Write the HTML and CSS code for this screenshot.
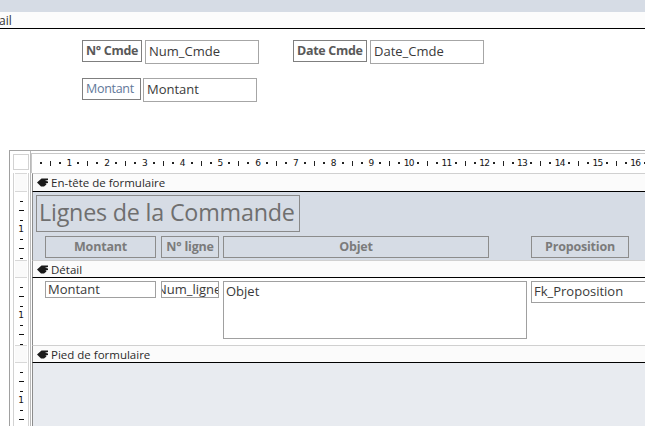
FILE: index.html
```html
<!DOCTYPE html>
<html lang="fr">
<head>
<meta charset="utf-8">
<title>Formulaire Commande</title>
<link rel="stylesheet" href="styles.css">
</head>
<body>
<div class="topband"></div>
<div class="tabbar"><span class="tabtext">ail</span></div>
<div class="mainform">
  <div class="row row1">
    <div class="lbl lbl-bold w-ncmde">N° Cmde</div>
    <div class="txt">Num_Cmde</div>
    <div class="lbl lbl-bold w-date">Date Cmde</div>
    <div class="txt">Date_Cmde</div>
  </div>
  <div class="row row2">
    <div class="lbl lbl-blue">Montant</div>
    <div class="txt">Montant</div>
  </div>
</div>

<div class="frame">
  <div class="frow ruler-row">
    <div class="side"><div class="strip"><div class="corner"></div></div></div>
    <div class="hruler">
      <span class="t dot"></span><span class="t bar"></span><span class="t dot"></span><span class="t num">1</span>
      <span class="t dot"></span><span class="t bar"></span><span class="t dot"></span><span class="t num">2</span>
      <span class="t dot"></span><span class="t bar"></span><span class="t dot"></span><span class="t num">3</span>
      <span class="t dot"></span><span class="t bar"></span><span class="t dot"></span><span class="t num">4</span>
      <span class="t dot"></span><span class="t bar"></span><span class="t dot"></span><span class="t num">5</span>
      <span class="t dot"></span><span class="t bar"></span><span class="t dot"></span><span class="t num">6</span>
      <span class="t dot"></span><span class="t bar"></span><span class="t dot"></span><span class="t num">7</span>
      <span class="t dot"></span><span class="t bar"></span><span class="t dot"></span><span class="t num">8</span>
      <span class="t dot"></span><span class="t bar"></span><span class="t dot"></span><span class="t num">9</span>
      <span class="t dot"></span><span class="t bar"></span><span class="t dot"></span><span class="t num">10</span>
      <span class="t dot"></span><span class="t bar"></span><span class="t dot"></span><span class="t num">11</span>
      <span class="t dot"></span><span class="t bar"></span><span class="t dot"></span><span class="t num">12</span>
      <span class="t dot"></span><span class="t bar"></span><span class="t dot"></span><span class="t num">13</span>
      <span class="t dot"></span><span class="t bar"></span><span class="t dot"></span><span class="t num">14</span>
      <span class="t dot"></span><span class="t bar"></span><span class="t dot"></span><span class="t num">15</span>
      <span class="t dot"></span><span class="t bar"></span><span class="t dot"></span><span class="t num">16</span>
      <span class="t dot"></span>
    </div>
  </div>

  <!-- En-tête de formulaire -->
  <div class="frow bar-row bar-head">
    <div class="side"><div class="strip"><div class="marker"></div></div></div>
    <div class="secbar">
      <svg class="grip" width="11" height="9" viewBox="0 0 11 9"><path d="M0 4.5 L4.5 0.5 L11 0.5 L11 2 L8 2.8 L11 3.6 L11 5 L8.5 5.6 L9.5 6.5 L7 8.5 L4 8.5 Z" fill="#1a1a1a"/></svg>
      <span>En-tête de formulaire</span>
    </div>
  </div>
  <div class="frow body-row body-head">
    <div class="side"><div class="strip vruler">
      <span class="v dash"></span><span class="v long"></span><span class="v dash"></span><span class="v vnum">1</span>
      <span class="v dash"></span><span class="v long"></span><span class="v dash"></span>
    </div></div>
    <div class="secbody head-body">
      <div class="title">Lignes de la Commande</div>
      <div class="collabels">
        <div class="clbl c-montant">Montant</div>
        <div class="clbl c-ligne">N° ligne</div>
        <div class="clbl c-objet">Objet</div>
        <div class="clbl c-prop">Proposition</div>
      </div>
    </div>
  </div>

  <!-- Détail -->
  <div class="frow bar-row">
    <div class="side"><div class="strip"><div class="marker"></div></div></div>
    <div class="secbar">
      <svg class="grip" width="11" height="9" viewBox="0 0 11 9"><path d="M0 4.5 L4.5 0.5 L11 0.5 L11 2 L8 2.8 L11 3.6 L11 5 L8.5 5.6 L9.5 6.5 L7 8.5 L4 8.5 Z" fill="#1a1a1a"/></svg>
      <span>Détail</span>
    </div>
  </div>
  <div class="frow body-row body-detail">
    <div class="side"><div class="strip vruler">
      <span class="v dash"></span><span class="v long"></span><span class="v dash"></span><span class="v vnum">1</span>
      <span class="v dash"></span><span class="v long"></span><span class="v dash"></span>
    </div></div>
    <div class="secbody detail-body">
      <div class="dbox d-montant">Montant</div>
      <div class="dbox d-ligne">Num_ligne</div>
      <div class="dbox d-objet">Objet</div>
      <div class="dbox d-prop">Fk_Proposition</div>
    </div>
  </div>

  <!-- Pied de formulaire -->
  <div class="frow bar-row">
    <div class="side"><div class="strip"><div class="marker"></div></div></div>
    <div class="secbar">
      <svg class="grip" width="11" height="9" viewBox="0 0 11 9"><path d="M0 4.5 L4.5 0.5 L11 0.5 L11 2 L8 2.8 L11 3.6 L11 5 L8.5 5.6 L9.5 6.5 L7 8.5 L4 8.5 Z" fill="#1a1a1a"/></svg>
      <span>Pied de formulaire</span>
    </div>
  </div>
  <div class="frow body-row body-foot">
    <div class="side"><div class="strip vruler">
      <span class="v dash"></span><span class="v long"></span><span class="v dash"></span><span class="v vnum">1</span>
      <span class="v dash"></span><span class="v long"></span><span class="v dash"></span>
    </div></div>
    <div class="secbody foot-body"></div>
  </div>
</div>
</body>
</html>
```

FILE: styles.css
```css
* { box-sizing: border-box; }
html, body { margin: 0; padding: 0; }
body {
  width: 645px;
  height: 426px;
  overflow: hidden;
  background: #ffffff;
  font-family: "Open Sans", "Noto Sans", sans-serif;
  color: #333;
}

.topband { height: 12px; background: #d6dce5; }
.tabbar {
  height: 17px;
  background: #fcfcfc;
  border-bottom: 1px solid #000;
  font-size: 12px;
  line-height: 17px;
  color: #333;
}
.tabtext { display: inline-block; margin-left: -1px; }

.mainform {
  height: 121px;
  padding-top: 11px;
}
.row { display: flex; align-items: flex-start; }
.row1 { padding-left: 82px; }
.row2 { padding-left: 82px; margin-top: 14px; }

.lbl {
  height: 22px;
  border: 1px solid #7f7f7f;
  font-size: 12.5px;
  line-height: 19px;
  padding-left: 3px;
  white-space: nowrap;
  overflow: hidden;
}
.lbl-bold { font-weight: 700; color: #595959; letter-spacing: -0.3px; }
.lbl-blue { color: #5f7899; width: 59px; letter-spacing: -0.3px; }
.w-ncmde { width: 60px; }
.w-date { width: 74px; margin-left: 34px; }
.txt {
  width: 114px;
  height: 24px;
  border: 1px solid #a6a6a6;
  margin-left: 3px;
  font-size: 13px;
  line-height: 20px;
  padding-left: 3px;
  color: #3a3a3a;
  white-space: nowrap;
}
.row2 .txt { margin-left: 2px; }

/* design frame */
.frame {
  margin-left: 9px;
  border-top: 1px solid #a6a6a6;
  border-left: 1px solid #a0a0a0;
  height: 276px;
  overflow: hidden;
}
.frow { display: flex; }
.side {
  width: 21px;
  flex: none;
  padding-left: 3px;
  padding-right: 1px;
  border-right: 1px solid #b9b9b9;
  background: #fff;
}
.strip {
  height: 100%;
  border-left: 1px solid #d2d2d2;
  border-right: 1px solid #d2d2d2;
}

.ruler-row { height: 22px; }
.ruler-row .strip { padding-top: 3px; border: none; }
.corner {
  height: 16px;
  border: 1px solid #d2d2d2;
}
.hruler {
  flex: 1;
  margin-top: 2px;
  border-top: 1px solid #c8c8c8;
  border-left: 1px solid #c8c8c8;
  display: flex;
  align-items: center;
  padding-left: 4px;
  height: 20px;
  padding-bottom: 1px;
  white-space: nowrap;
}
.t {
  width: 9.45px;
  flex: none;
  display: flex;
  justify-content: center;
  align-items: center;
  height: 12px;
}
.dot::before { content: ""; width: 2px; height: 2px; background: #222; }
.bar::before { content: ""; width: 1px; height: 5px; background: #222; }
.num {
  font-family: "DejaVu Sans", sans-serif;
  font-size: 9px;
  letter-spacing: -0.8px;
  color: #111;
  line-height: 12px;
}

/* section bars */
.bar-row { height: 18px; }
.bar-head { height: 19px; }
.marker {
  height: 100%;
  margin: 0 1px;
  border-top: 1px solid #d8d8d8;
  border-bottom: 1px solid #d8d8d8;
  background: #fafafa;
}
.secbar {
  flex: 1;
  margin-left: 1px;
  border-left: 1px solid #8c8c8c;
  border-top: 1px solid #d0d0d0;
  border-bottom: 1px solid #000;
  background: #fbfbfb;
  display: flex;
  align-items: center;
  padding-left: 4px;
  font-size: 11.5px;
  color: #2b2b2b;
  white-space: nowrap;
}
.grip { margin-right: 3px; flex: none; }

/* section bodies */
.body-head { height: 68px; }
.body-detail { height: 67px; }
.body-foot { height: 70px; }
.secbody {
  flex: 1;
  margin-left: 1px;
  border-left: 1px solid #8c8c8c;
  overflow: hidden;
}
.vruler {
  display: flex;
  flex-direction: column;
  align-items: center;
  padding-top: 4.7px;
}
.v {
  height: 9.45px;
  flex: none;
  display: flex;
  align-items: center;
  justify-content: center;
  width: 100%;
}
.dash::before { content: ""; width: 3px; height: 1px; background: #111; }
.long::before { content: ""; width: 5px; height: 1px; background: #111; }
.vnum {
  font-family: "DejaVu Sans", sans-serif;
  font-size: 9px;
  color: #111;
  line-height: 9px;
}

.head-body {
  background: #d6dce5;
  padding-top: 3px;
  padding-left: 3px;
}
.title {
  width: 264px;
  height: 37px;
  border: 1px solid #8a8a8a;
  font-size: 23.3px;
  line-height: 33px;
  color: #6f6f6f;
  padding-left: 2px;
  letter-spacing: -0.2px;
  white-space: nowrap;
  overflow: hidden;
}
.collabels {
  display: flex;
  margin-top: 4px;
  padding-left: 9px;
}
.clbl {
  height: 22px;
  border: 1px solid #8c8c8c;
  font-size: 12.5px;
  font-weight: 700;
  color: #7b7b7b;
  text-align: center;
  line-height: 19px;
  white-space: nowrap;
  overflow: hidden;
  letter-spacing: -0.2px;
}
.c-montant { width: 111px; }
.c-ligne { width: 58px; margin-left: 5px; }
.c-objet { width: 266px; margin-left: 4px; }
.c-prop { width: 98px; margin-left: 42px; }

.detail-body {
  background: #fff;
  display: flex;
  align-items: flex-start;
  padding-top: 3px;
  padding-left: 12px;
}
.dbox {
  border: 1px solid #a0a0a0;
  font-size: 13px;
  line-height: 14px;
  color: #3a3a3a;
  padding-left: 2px;
  white-space: nowrap;
  overflow: hidden;
  flex: none;
}
.d-montant { width: 111px; height: 17px; }
.d-ligne { width: 58px; height: 17px; margin-left: 5px; text-indent: -7px; }
.d-objet { width: 304px; height: 58px; margin-left: 4px; padding-top: 2px; }
.d-prop { width: 130px; height: 22px; margin-left: 4px; line-height: 19px; }

.foot-body { background: #e8ebf0; }
```
